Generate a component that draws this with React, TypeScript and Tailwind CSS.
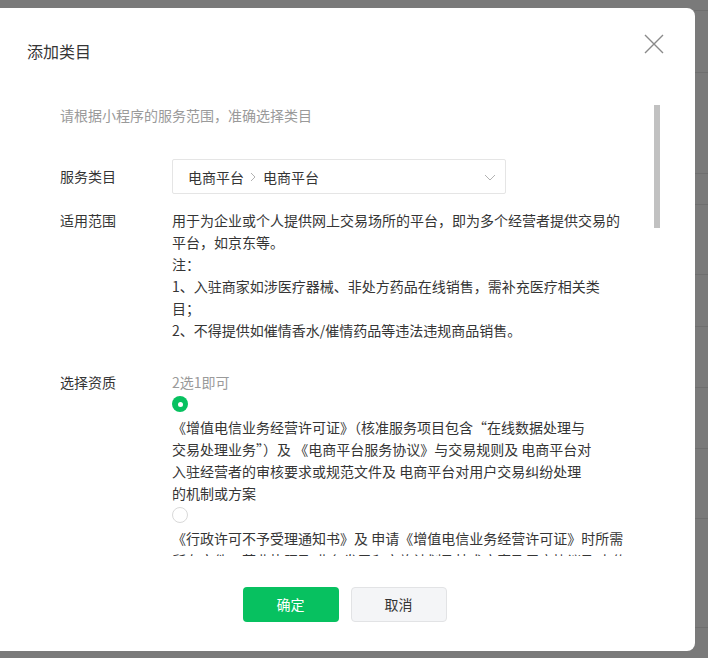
import React from "react";

const bgLines = [10, 72, 173, 204, 274, 326, 387, 448, 518, 627];

function ChevronDown() {
  return (
    <svg width="14" height="14" viewBox="0 0 14 14" fill="none">
      <path d="M2 5l5 5 5-5" stroke="#b2b2b2" strokeWidth="1" />
    </svg>
  );
}

function ChevronRight() {
  return (
    <svg width="12" height="14" viewBox="0 0 12 14" fill="none">
      <path d="M4 3l4 4-4 4" stroke="#b2b2b2" strokeWidth="1" />
    </svg>
  );
}

function Radio({ checked }: { checked?: boolean }) {
  if (checked) {
    return (
      <span className="flex h-[16px] w-[16px] items-center justify-center rounded-full bg-[#07c160]">
        <span className="h-[5px] w-[5px] rounded-full bg-white" />
      </span>
    );
  }
  return <span className="block h-[16px] w-[16px] rounded-full border border-[#d9d9d9] bg-white" />;
}

export default function App() {
  return (
    <div
      className="relative h-[658px] w-[708px] overflow-hidden bg-[#7a7a7a]"
      style={{ fontFamily: '"Noto Sans CJK SC", "Noto Sans", sans-serif' }}
    >
      {/* page behind the mask */}
      {bgLines.map((y) => (
        <div key={y} className="absolute left-0 right-0 h-px bg-[#6f6f6f]" style={{ top: y }} />
      ))}

      <div className="relative flex h-[658px] flex-col pt-[8px] pb-[7px] pr-[13px]">
        <div className="relative flex flex-1 flex-col rounded-r-[8px] bg-white">
          {/* header */}
          <div className="pl-[27px] pt-[31px] text-[16px] leading-[24px] text-[#353535]">添加类目</div>
          <button className="absolute right-[31px] top-[26px] p-0">
            <svg width="20" height="20" viewBox="0 0 20 20" fill="none">
              <path d="M1 1l18 18M19 1L1 19" stroke="#8a8a8a" strokeWidth="1.4" />
            </svg>
          </button>

          {/* body */}
          <div className="relative mt-[37px] h-[456px] overflow-hidden">
            <div className="absolute right-[35px] top-[5px] h-[123px] w-[6px] bg-[#c1c1c1]" />
            <div className="pl-[60px] pt-[4px] text-[14px] leading-[22px] text-[#353535]">
              <p className="text-[#9a9a9a]">请根据小程序的服务范围，准确选择类目</p>

              <div className="mt-[33px] flex items-center">
                <div className="w-[112px] -translate-y-[1px]">服务类目</div>
                <div className="flex h-[35px] w-[334px] items-center justify-between rounded-[2px] border border-[#e5e5e5] pl-[15px] pr-[8px]">
                  <div className="flex items-center">
                    <span>电商平台</span>
                    <span className="ml-[3px] mr-[4px]">
                      <ChevronRight />
                    </span>
                    <span>电商平台</span>
                  </div>
                  <ChevronDown />
                </div>
              </div>

              <div className="mt-[15px] flex">
                <div className="w-[112px] shrink-0">适用范围</div>
                <div className="w-[452px]">
                  <p>用于为企业或个人提供网上交易场所的平台，即为多个经营者提供交易的平台，如京东等。</p>
                  <p>注：</p>
                  <p>1、入驻商家如涉医疗器械、非处方药品在线销售，需补充医疗相关类目；</p>
                  <p>2、不得提供如催情香水/催情药品等违法违规商品销售。</p>
                </div>
              </div>

              <div className="mt-[30px] flex">
                <div className="w-[112px] shrink-0">选择资质</div>
                <div className="w-[460px]">
                  <p className="text-[#9a9a9a]">2选1即可</p>
                  <div className="mt-[3px]">
                    <Radio checked />
                  </div>
                  <p className="mt-[4px]">
                    《增值电信业务经营许可证》（核准服务项目包含“在线数据处理与
                    <br />
                    交易处理业务”）及 《电商平台服务协议》与交易规则及 电商平台对
                    <br />
                    入驻经营者的审核要求或规范文件及 电商平台对用户交易纠纷处理
                    <br />
                    的机制或方案
                  </p>
                  <div className="mt-[3px]">
                    <Radio />
                  </div>
                  <p className="mt-[4px]">
                    《行政许可不予受理通知书》及 申请《增值电信业务经营许可证》时所需所有文件，营业执照及 业务发展和实施计划及技术方案及用户协议及 上传
                  </p>
                </div>
              </div>
            </div>
          </div>

          {/* footer */}
          <div className="flex justify-center gap-[12px] pr-[6px] pt-[31px]">
            <button className="h-[35px] w-[96px] rounded-[4px] bg-[#07c160] text-[14px] text-white">确定</button>
            <button className="h-[35px] w-[96px] rounded-[4px] border border-[#e2e3e5] bg-[#f4f5f7] text-[14px] text-[#353535]">
              取消
            </button>
          </div>
        </div>
      </div>
    </div>
  );
}
